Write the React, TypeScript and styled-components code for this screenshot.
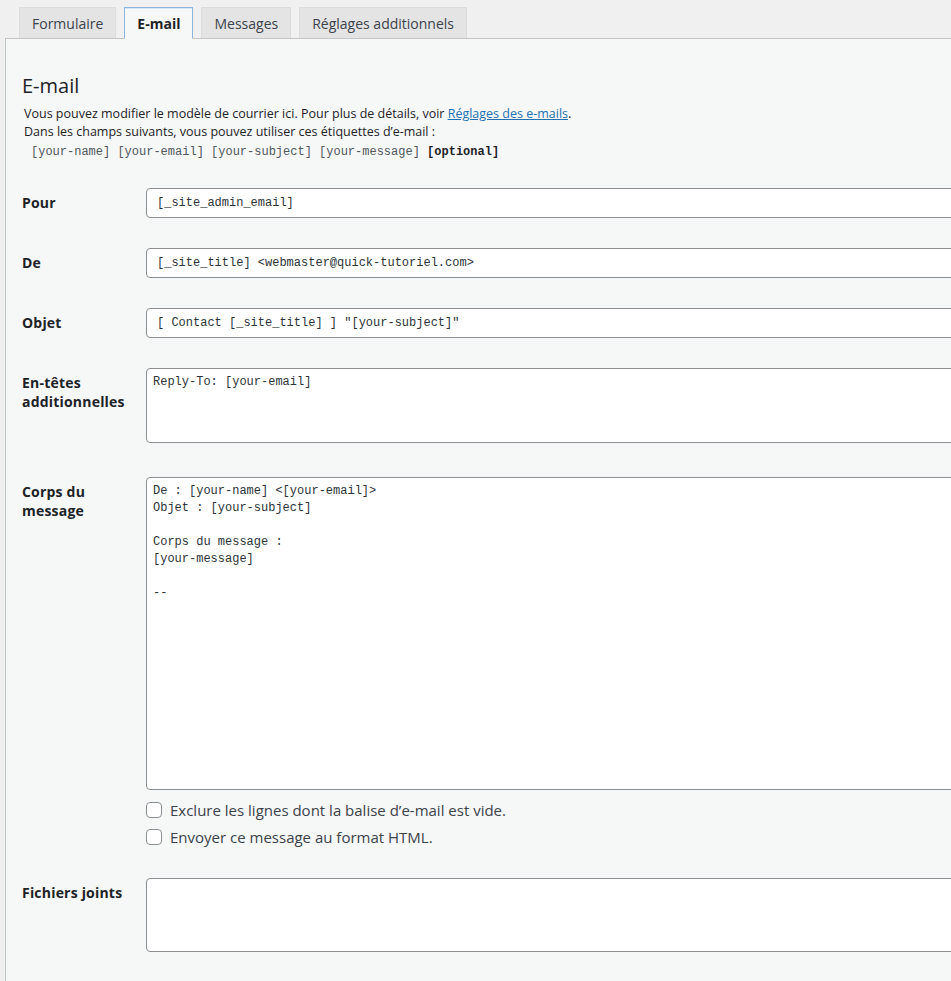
import styled, { createGlobalStyle } from 'styled-components'

const GlobalStyle = createGlobalStyle`
  html, body {
    margin: 0;
    padding: 0;
    background: #f0f0f1;
  }
  body {
    font-family: "Open Sans", "Liberation Sans", Arial, sans-serif;
    color: #1d2327;
    overflow: hidden;
  }
`

const Page = styled.div`
  padding: 7px 0 0 5px;
  width: 1100px;
`

const TabList = styled.ul`
  display: flex;
  gap: 8px;
  margin: 0;
  padding: 0 0 0 14px;
  list-style: none;
  position: relative;
  z-index: 1;
`

const Tab = styled.li<{ $active?: boolean }>`
  box-sizing: border-box;
  height: ${p => (p.$active ? '32px' : '31px')};
  margin-bottom: ${p => (p.$active ? '-1px' : '0')};
  padding: 0 12px;
  display: flex;
  align-items: center;
  font-size: 14px;
  font-weight: ${p => (p.$active ? 700 : 400)};
  color: ${p => (p.$active ? '#1d2327' : '#3c434a')};
  background: ${p => (p.$active ? '#f6f7f7' : '#e4e4e4')};
  border: 1px solid ${p => (p.$active ? '#8fb5df' : '#dcdcde')};
  border-bottom: ${p => (p.$active ? '1px solid #f6f7f7' : 'none')};
  box-shadow: ${p => (p.$active ? 'inset 0 1px 0 #d9e6f4' : 'none')};
`

const Panel = styled.section`
  background: #f6f7f7;
  border-top: 1px solid #c3c4c7;
  border-left: 1px solid #c3c4c7;
  padding: 35px 0 40px 16px;
  min-height: 920px;
`

const Heading = styled.h2`
  margin: 0 0 7px;
  font-size: 20px;
  font-weight: 400;
  line-height: 24px;
  color: #1d2327;
`

const Description = styled.p`
  margin: 0;
  padding-left: 2px;
  font-size: 12.5px;
  line-height: 18px;
  color: #1d2327;
`

const Link = styled.a`
  color: #2271b1;
  text-decoration: underline;
`

const Tags = styled.p`
  margin: 1px 0 0;
  padding-left: 9px;
  font-family: "Liberation Mono", "DejaVu Sans Mono", monospace;
  font-size: 12px;
  line-height: 20px;
  color: #50575e;
`

const Optional = styled.span`
  color: #1d2327;
  font-weight: 700;
`

const Fields = styled.div`
  margin-top: 26px;
  display: flex;
  flex-direction: column;
`

const Row = styled.div<{ $gap: number }>`
  display: grid;
  grid-template-columns: 124px 1fr;
  margin-bottom: ${p => p.$gap}px;
`

const Label = styled.label`
  padding-top: 5px;
  font-size: 14px;
  letter-spacing: 0.2px;
  font-weight: 700;
  line-height: 19px;
  color: #1d2327;
`

const Input = styled.div`
  box-sizing: border-box;
  height: 30px;
  padding: 0 10px;
  display: flex;
  align-items: center;
  background: #fff;
  border: 1px solid #8c8f94;
  border-radius: 4px;
  font-family: "Liberation Mono", "DejaVu Sans Mono", monospace;
  font-size: 12px;
  color: #2c3338;
  white-space: pre;
`

const TextArea = styled.div<{ $height: number }>`
  box-sizing: border-box;
  height: ${p => p.$height}px;
  padding: 5px 6px;
  background: #fff;
  border: 1px solid #8c8f94;
  border-radius: 4px;
  font-family: "Liberation Mono", "DejaVu Sans Mono", monospace;
  font-size: 12px;
  line-height: 17px;
  color: #2c3338;
  white-space: pre;
`

const Options = styled.div`
  display: flex;
  flex-direction: column;
  gap: 11px;
  margin-top: 12px;
`

const CheckLine = styled.label`
  display: flex;
  align-items: center;
  gap: 8px;
  font-size: 15px;
  line-height: 16px;
  color: #3c434a;
`

const Box = styled.span`
  box-sizing: border-box;
  width: 16px;
  height: 16px;
  background: #fff;
  border: 1px solid #8c8f94;
  border-radius: 4px;
  flex: none;
`

const bodyText = `De : [your-name] <[your-email]>
Objet : [your-subject]

Corps du message :
[your-message]

--`

export default function App() {
  return (
    <Page>
      <GlobalStyle />
      <TabList>
        <Tab>Formulaire</Tab>
        <Tab $active>E-mail</Tab>
        <Tab>Messages</Tab>
        <Tab>Réglages additionnels</Tab>
      </TabList>
      <Panel>
        <Heading>E-mail</Heading>
        <Description>
          Vous pouvez modifier le modèle de courrier ici. Pour plus de détails, voir{' '}
          <Link href="#">Réglages des e-mails</Link>.
        </Description>
        <Description>Dans les champs suivants, vous pouvez utiliser ces étiquettes d’e-mail :</Description>
        <Tags>
          [your-name] [your-email] [your-subject] [your-message] <Optional>[optional]</Optional>
        </Tags>

        <Fields>
          <Row $gap={30}>
            <Label>Pour</Label>
            <Input>[_site_admin_email]</Input>
          </Row>
          <Row $gap={30}>
            <Label>De</Label>
            <Input>{'[_site_title] <webmaster@quick-tutoriel.com>'}</Input>
          </Row>
          <Row $gap={30}>
            <Label>Objet</Label>
            <Input>[ Contact [_site_title] ] "[your-subject]"</Input>
          </Row>
          <Row $gap={34}>
            <Label>
              En-têtes
              <br />
              additionnelles
            </Label>
            <TextArea $height={75}>Reply-To: [your-email]</TextArea>
          </Row>
          <Row $gap={33}>
            <Label>
              Corps du
              <br />
              message
            </Label>
            <div>
              <TextArea $height={313}>{bodyText}</TextArea>
              <Options>
                <CheckLine>
                  <Box />
                  Exclure les lignes dont la balise d’e-mail est vide.
                </CheckLine>
                <CheckLine>
                  <Box />
                  Envoyer ce message au format HTML.
                </CheckLine>
              </Options>
            </div>
          </Row>
          <Row $gap={30}>
            <Label>Fichiers joints</Label>
            <TextArea $height={74} />
          </Row>
        </Fields>
      </Panel>
    </Page>
  )
}
